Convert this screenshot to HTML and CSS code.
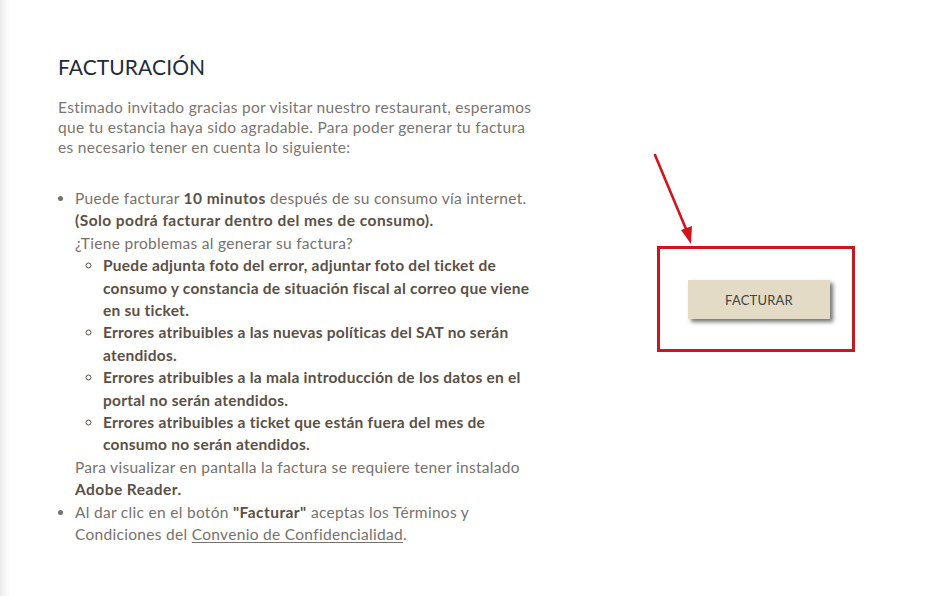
FILE: index.html
```html
<!DOCTYPE html>
<html lang="es">
<head>
<meta charset="utf-8">
<title>Facturación</title>
<link rel="stylesheet" href="styles.css">
</head>
<body>
<div class="page">
  <section class="info">
    <h1 class="title">FACTURACIÓN</h1>
    <p class="intro">Estimado invitado gracias por visitar nuestro restaurant, esperamos que tu estancia haya sido agradable. Para poder generar tu factura es necesario tener en cuenta lo siguiente:</p>
    <ul class="rules">
      <li>Puede facturar <b>10 minutos</b> después de su consumo vía internet.<br><b>(Solo podrá facturar dentro del mes de consumo).</b><br>¿Tiene problemas al generar su factura?
        <ul class="sub">
          <li>Puede adjunta foto del error, adjuntar foto del ticket de consumo y constancia de situación fiscal al correo que viene en su ticket.</li>
          <li>Errores atribuibles a las nuevas políticas del SAT no serán atendidos.</li>
          <li>Errores atribuibles a la mala introducción de los datos en el portal no serán atendidos.</li>
          <li>Errores atribuibles a ticket que están fuera del mes de consumo no serán atendidos.</li>
        </ul>
        Para visualizar en pantalla la factura se requiere tener instalado<br><b>Adobe Reader.</b>
      </li>
      <li>Al dar clic en el botón <b>"Facturar"</b> aceptas los Términos y Condiciones del <a href="#" class="link">Convenio de Confidencialidad</a>.</li>
    </ul>
  </section>
  <aside class="action">
    <div class="highlight">
      <svg class="arrow" width="50" height="100" viewBox="0 0 50 100">
        <line x1="2" y1="2" x2="33" y2="76" stroke="#d2141c" stroke-width="2.6" stroke-linecap="round"/>
        <polygon points="38,91 28,77 39,73" fill="#d2141c"/>
      </svg>
      <button class="btn" type="button">FACTURAR</button>
    </div>
  </aside>
</div>
</body>
</html>
```

FILE: styles.css
```css
html, body {
  margin: 0;
  padding: 0;
  height: 100%;
}
body {
  background: linear-gradient(to right, #ebebeb 0, #f7f7f7 5px, #ffffff 11px);
  font-family: Lato, "Noto Sans", sans-serif;
  color: #77716b;
}
.page {
  display: grid;
  grid-template-columns: 478px 200px;
  column-gap: 121px;
  padding: 53px 0 0 58px;
}
.title {
  margin: 0;
  font-size: 21px;
  line-height: 28px;
  font-weight: 400;
  color: #1f2c38;
  letter-spacing: 0.1px;
}
.intro {
  margin: 16px 0 0;
  font-size: 15.5px;
  line-height: 20px;
  letter-spacing: 0.3px;
  color: #7a756f;
}
.rules {
  margin: 30px 0 0;
  padding-left: 17px;
  font-size: 15.5px;
  line-height: 22.4px;
  letter-spacing: 0.3px;
}
.rules b {
  font-weight: 700;
  color: #5a5047;
  letter-spacing: 0.45px;
}
.sub {
  margin: 0;
  padding-left: 28px;
  list-style: circle;
  font-weight: 700;
  color: #5a5047;
  letter-spacing: 0.25px;
}
.link {
  color: #77716b;
  text-decoration: underline;
  text-underline-offset: 2px;
}
.action {
  padding-top: 193px;
}
.highlight {
  position: relative;
  width: 192px;
  height: 100px;
  border: 3px solid #c9171f;
  box-sizing: content-box;
  padding: 0;
  display: flex;
  align-items: flex-start;
}
.arrow {
  position: absolute;
  left: -7px;
  top: -96px;
}
.btn {
  margin: 31px 0 0 28px;
  width: 142px;
  height: 39px;
  border: none;
  background: #e3dbc6;
  box-shadow: 3px 3px 4px rgba(0, 0, 0, 0.55);
  font-family: Lato, "Noto Sans", sans-serif;
  font-size: 13px;
  color: #45423e;
  letter-spacing: 0.2px;
}
```
